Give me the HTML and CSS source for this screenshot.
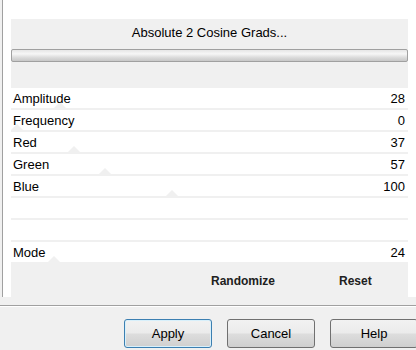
FILE: index.html
```html
<!DOCTYPE html>
<html lang="en">
<head>
    <meta charset="UTF-8">
    <title>Absolute 2 Cosine Grads</title>
    <link rel="stylesheet" href="styles.css">
</head>
<body>

<div class="main">
    <div class="header">
        <div class="title">Absolute 2 Cosine Grads...</div>
        <div class="progress"></div>
    </div>

    <div class="row"><span>Amplitude</span><span>28</span><i class="thumb" style="left: 43px"></i></div>
    <div class="row"><span>Frequency</span><span>0</span><i class="thumb" style="left: 0px"></i></div>
    <div class="row"><span>Red</span><span>37</span><i class="thumb" style="left: 57px"></i></div>
    <div class="row"><span>Green</span><span>57</span><i class="thumb" style="left: 88px"></i></div>
    <div class="row"><span>Blue</span><span>100</span><i class="thumb" style="left: 155px"></i></div>
    <div class="row"></div>
    <div class="row"></div>
    <div class="row"><span>Mode</span><span>24</span><i class="thumb" style="left: 37px"></i></div>

    <div class="actions">
        <span class="randomize">Randomize</span>
        <span class="reset">Reset</span>
    </div>
</div>

<div class="footer">
    <button class="default">Apply</button>
    <button>Cancel</button>
    <button>Help</button>
</div>

</body>
</html>
```

FILE: styles.css
```css
body {
    margin: 0;
    width: 416px;
    height: 350px;
    overflow: hidden;
    background-color: #f0f0f0;
    font-family: "Liberation Sans", Arial, sans-serif;
    font-size: 13px;
    color: #000;
}

.main {
    height: 297px;
    box-sizing: border-box;
    margin-left: 2px;
    padding: 19px 8px 0 8px;
    border-left: 1px solid #a0a0a0;
    background-color: #fff;
}

.header {
    height: 69px;
    box-sizing: border-box;
    padding-top: 6px;
    background-color: #f0f0f0;
}

.title {
    height: 16px;
    line-height: 16px;
    text-align: center;
}

.progress {
    height: 11px;
    margin-top: 8px;
    border: 1px solid #a0a0a0;
    border-radius: 2px;
    background: linear-gradient(#e6e6e6, #f6f6f6 35%, #dadada 70%, #c8c8c8);
}

.row {
    position: relative;
    height: 20px;
    display: flex;
    justify-content: space-between;
    align-items: center;
    padding: 0 3px 0 2px;
    border-bottom: 2px solid #f0f0f0;
}

.row span {
    position: relative;
    z-index: 1;
}

.thumb {
    position: absolute;
    bottom: 0;
    width: 0;
    height: 0;
    border-left: 6px solid transparent;
    border-right: 6px solid transparent;
    border-bottom: 6px solid #f0f0f0;
}

.actions {
    height: 33px;
    display: flex;
    align-items: center;
    background-color: #f0f0f0;
    font-weight: bold;
    font-size: 12px;
    color: #202020;
}

.randomize {
    margin-left: 200px;
}

.reset {
    margin-left: 64px;
}

.footer {
    margin-top: 8px;
    border-top: 1px solid #a0a0a0;
    box-shadow: inset 0 1px 0 #fff;
    display: flex;
    gap: 15px;
    padding: 13px 0 0 124px;
}

button {
    width: 88px;
    height: 29px;
    border: 1px solid #707070;
    border-radius: 3px;
    background: linear-gradient(#f2f2f2, #ebebeb 48%, #dddddd 52%, #cfcfcf);
    font-family: "Liberation Sans", Arial, sans-serif;
    font-size: 13px;
    color: #000;
    flex: none;
}

button.default {
    border-color: #3c7fb1;
    box-shadow: inset 0 0 0 1px #d8f0fb;
}
```
